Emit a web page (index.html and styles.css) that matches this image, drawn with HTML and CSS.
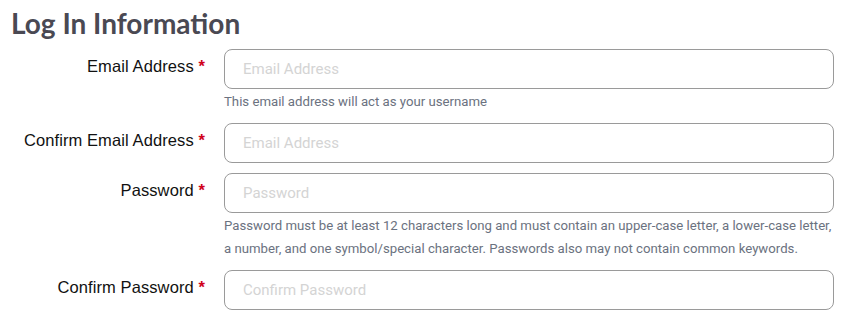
FILE: index.html
```html
<!DOCTYPE html>
<html lang="en">
<head>
    <meta charset="UTF-8">
    <title>Log In Information</title>
    <link rel="stylesheet" href="styles.css">
</head>
<body>
    <section class="login-info">
        <h2>Log In Information</h2>

        <div class="form-row">
            <label for="email">Email Address <span class="req">*</span></label>
            <div class="field">
                <input type="email" id="email" placeholder="Email Address">
                <p class="help">This email address will act as your username</p>
            </div>
        </div>

        <div class="form-row">
            <label for="email2">Confirm Email Address <span class="req">*</span></label>
            <div class="field">
                <input type="email" id="email2" placeholder="Email Address">
            </div>
        </div>

        <div class="form-row">
            <label for="password">Password <span class="req">*</span></label>
            <div class="field">
                <input type="password" id="password" placeholder="Password">
                <p class="help">Password must be at least 12 characters long and must contain an upper-case letter, a lower-case letter, a number, and one symbol/special character. Passwords also may not contain common keywords.</p>
            </div>
        </div>

        <div class="form-row">
            <label for="password2">Confirm Password <span class="req">*</span></label>
            <div class="field">
                <input type="password" id="password2" placeholder="Confirm Password">
            </div>
        </div>
    </section>
</body>
</html>
```

FILE: styles.css
```css
* {
    margin: 0;
    padding: 0;
    box-sizing: border-box;
}

body {
    font-family: "Liberation Sans", Arial, sans-serif;
    background: #fff;
    color: #111;
    padding: 5px 15px 0 11px;
}

h2 {
    font-family: Lato, sans-serif;
    font-weight: 700;
    font-size: 28px;
    line-height: 36px;
    color: #4a4953;
    margin-bottom: 8px;
}

.form-row {
    display: flex;
    margin-bottom: 10px;
}

.form-row label {
    width: 213px;
    flex-shrink: 0;
    text-align: right;
    padding-right: 19px;
    padding-top: 7px;
    font-size: 16.5px;
    letter-spacing: 0.1px;
    line-height: 20px;
    color: #111;
}

.req {
    color: #d0021b;
    font-weight: 700;
}

.field {
    flex: 1;
}

.field input {
    width: 100%;
    height: 40px;
    padding: 0 18px;
    border: 1px solid #9a9a9a;
    border-radius: 8px;
    font-family: Roboto, sans-serif;
    font-size: 15px;
    color: #111;
    background: #fff;
}

.field input::placeholder {
    color: #d4d4d4;
}

.help {
    font-family: Roboto, sans-serif;
    font-size: 13.2px;
    line-height: 23px;
    color: #6b7280;
    margin-top: 1px;
}
```
